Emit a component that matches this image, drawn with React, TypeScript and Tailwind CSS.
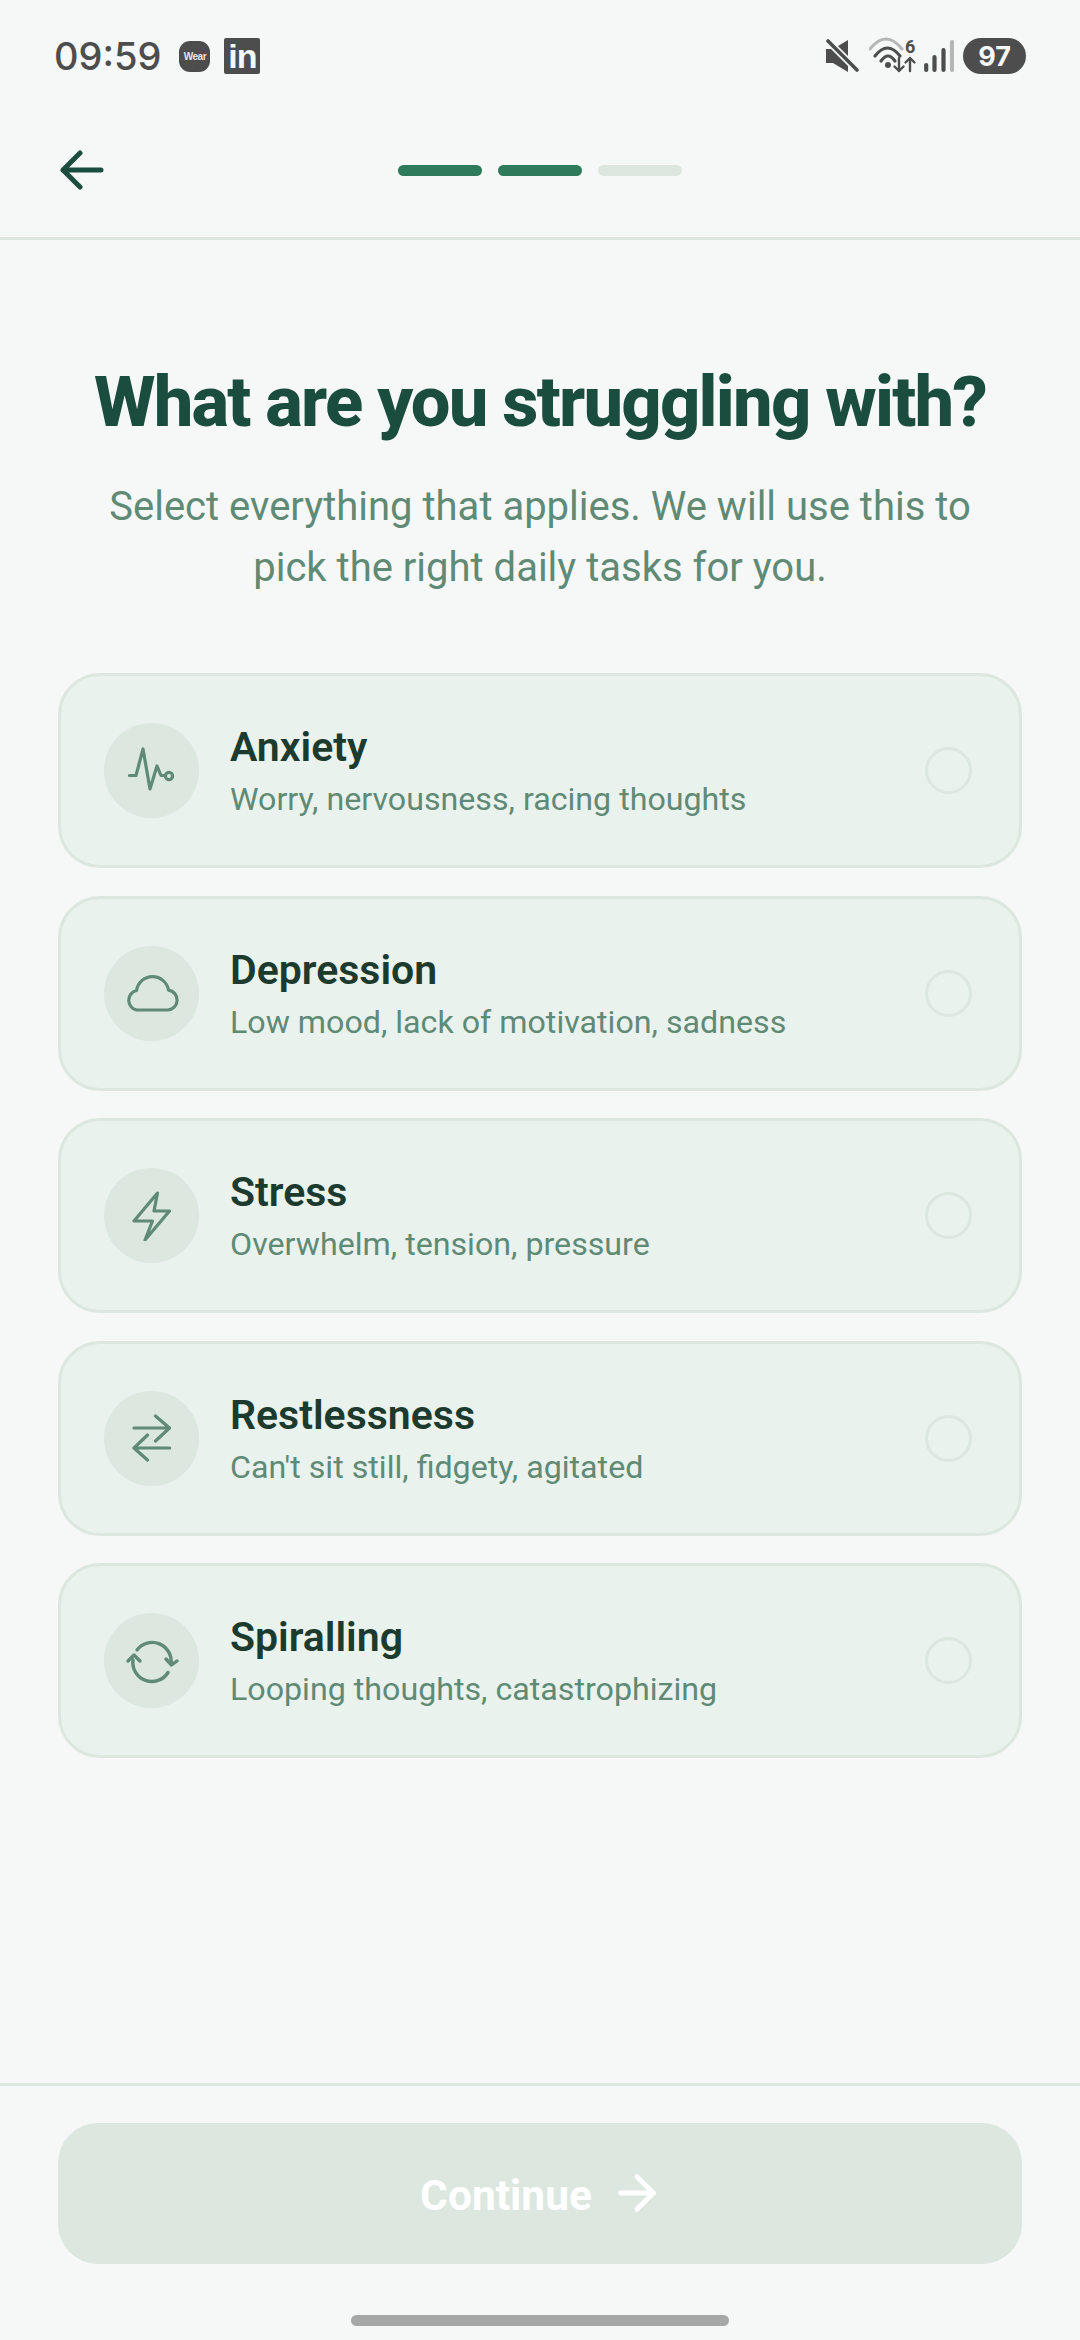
import { ArrowRight } from "lucide-react";
import type { ReactNode } from "react";

const options: { title: string; sub: string; icon: ReactNode }[] = [
  {
    title: "Anxiety",
    sub: "Worry, nervousness, racing thoughts",
    icon: (
      <svg viewBox="0 0 48 48" className="h-[48px] w-[48px]" fill="none" stroke="#5f8a76" strokeWidth="3.2" strokeLinecap="round" strokeLinejoin="round">
        <path d="M1.5 28.5h6.5L15 2l7 40 7-23 4 9.500h4.500" />
        <circle cx="41" cy="29" r="3.600" />
      </svg>
    ),
  },
  {
    title: "Depression",
    sub: "Low mood, lack of motivation, sadness",
    icon: (
      <svg viewBox="-1.5 -1.5 56 38" className="h-[38px] w-[56px]" fill="none" stroke="#5f8a76" strokeWidth="3.2" strokeLinecap="round" strokeLinejoin="round">
        <path d="M11 34.5h31a10 10 0 0 0 1-19.9A16.2 16.2 0 0 0 11 15a10 10 0 0 0 0 19.5z" />
      </svg>
    ),
  },
  {
    title: "Stress",
    sub: "Overwhelm, tension, pressure",
    icon: (
      <svg viewBox="-1.5 -1 39 50" className="h-[50px] w-[39px]" fill="none" stroke="#5f8a76" strokeWidth="3.2" strokeLinecap="round" strokeLinejoin="round">
        <path d="M24 1L0.5 29H19L11.5 48L36 19H20.5z" />
      </svg>
    ),
  },
  {
    title: "Restlessness",
    sub: "Can't sit still, fidgety, agitated",
    icon: (
      <svg viewBox="-1.5 -1 39 48" className="h-[48px] w-[39px]" fill="none" stroke="#5f8a76" strokeWidth="3.2" strokeLinecap="round" strokeLinejoin="round">
        <path d="M0.5 13H36M22 1l14 12-14 13M36 33H0.5M14 20L0.5 33 14 45" />
      </svg>
    ),
  },
  {
    title: "Spiralling",
    sub: "Looping thoughts, catastrophizing",
    icon: (
      <svg viewBox="-28 -28 56 56" className="h-[56px] w-[56px]" fill="none" stroke="#5f8a76" strokeWidth="3.4" strokeLinecap="round" strokeLinejoin="round">
        <path d="M-15 -11A19 19 0 0 1 19 3" />
        <path d="M14 -2L19.5 4 25 0" />
        <path d="M16 11.5A19 19 0 0 1 -19 -1" />
        <path d="M-24 0L-18 -6 -12 0" />
      </svg>
    ),
  },
];

function StatusBar() {
  return (
    <div className="flex h-[112px] items-center justify-between pl-[54px] pr-[54px] text-[#4d4d4d]">
      <div className="flex items-center">
        <span className="font-['Inter'] text-[38px] leading-none font-medium">09:59</span>
        <div className="ml-[18px] flex h-[31px] w-[31px] items-center justify-center rounded-[11px] bg-[#4d4d4d] font-['Liberation_Sans'] text-[10px] font-bold tracking-[-0.5px] text-[#e4e4e4]">
          Wear
        </div>
        <div className="ml-[14px] flex h-[36px] w-[36px] items-end justify-center rounded-[2px] bg-[#4d4d4d] pb-[2px] font-['Liberation_Sans'] text-[34px] leading-[32px] font-bold tracking-[-1px] text-[#f6f8f7]">
          in
        </div>
      </div>
      <div className="flex items-center">
        <svg viewBox="0 0 34 34" className="h-[34px] w-[34px]" fill="#4d4d4d">
          <path d="M1 10h7L23 1v32L8 24H1z" />
          <path d="M3 2l29 29" stroke="#f6f8f7" strokeWidth="7" />
          <path d="M3 2l29 29" stroke="#4d4d4d" strokeWidth="3.6" strokeLinecap="round" />
        </svg>
        <svg viewBox="0 0 48 38" className="ml-[10px] h-[38px] w-[48px]" fill="none" strokeLinecap="round" strokeLinejoin="round">
          <path d="M1 12Q17 -8 33 12" stroke="#b5b6b5" strokeWidth="3" />
          <path d="M6 19Q18.5 3 31 19" stroke="#4d4d4d" strokeWidth="3.2" />
          <path d="M12 24Q19 14 26 24" stroke="#4d4d4d" strokeWidth="3.2" />
          <circle cx="19" cy="28" r="3" fill="#4d4d4d" />
          <path d="M30 21v13m-4.500-4.500l4.500 4.500 4.500-4.500M41 34V21m-4.500 4.500l4.500-4.500 4.500 4.500" stroke="#4d4d4d" strokeWidth="2.4" />
          <text x="36" y="16" fill="#4d4d4d" fontFamily="Roboto" fontSize="18" fontWeight="700">6</text>
        </svg>
        <svg viewBox="0 0 30 34" className="ml-[7px] h-[34px] w-[30px]" fill="none" strokeLinecap="round" strokeWidth="4.2">
          <path d="M2.2 31v-5M10.5 31V18M19.500 31V11" stroke="#4d4d4d" />
          <path d="M28 31V3" stroke="#b5b6b5" />
        </svg>
        <div className="ml-[9px] flex h-[36px] w-[63px] items-center justify-center rounded-full bg-[#4d4d4d] font-['Inter'] text-[27px] leading-none font-bold text-[#f6f8f7]">
          97
        </div>
      </div>
    </div>
  );
}

function OptionCard({ title, sub, icon }: { title: string; sub: string; icon: ReactNode }) {
  return (
    <div className="flex h-[195px] items-center rounded-[42px] border-[3.5px] border-[#dce7e0] bg-[#e9f2ed] pl-[43px] pr-[47px]">
      <div className="flex h-[95px] w-[95px] shrink-0 items-center justify-center rounded-full bg-[#dce7e0]">{icon}</div>
      <div className="ml-[31px] flex-1 pt-[3px]">
        <div className="text-[41px] leading-[48px] font-semibold text-[#1c3a2e]">{title}</div>
        <div className="mt-[6px] text-[32.2px] leading-[44px] text-[#5f8a76]">{sub}</div>
      </div>
      <div className="h-[47px] w-[47px] shrink-0 rounded-full border-[3.5px] border-[#dce7e0]" />
    </div>
  );
}

export default function App() {
  return (
    <div className="flex h-[2340px] w-[1080px] flex-col overflow-hidden bg-[#f6f8f7] font-['Roboto',sans-serif]">
      <StatusBar />
      <div className="relative flex h-[128px] items-center justify-center border-b-[3.5px] border-[#dce7e0] pb-[8px]">
        <svg viewBox="0 0 44 40" className="absolute left-[60px] top-[38px] h-[40px] w-[44px]" fill="none" stroke="#1b4d3e" strokeWidth="5" strokeLinecap="round" strokeLinejoin="round">
          <path d="M3 20h38M20 3L3 20l17 17" />
        </svg>
        <div className="flex gap-[16px]">
          <div className="h-[11px] w-[84px] rounded-full bg-[#2f7a5a]" />
          <div className="h-[11px] w-[84px] rounded-full bg-[#2f7a5a]" />
          <div className="h-[11px] w-[84px] rounded-full bg-[#dce7e0]" />
        </div>
      </div>

      <div className="flex-1 px-[58px] pt-[121px]">
        <h1 className="text-center text-[70.5px] leading-[82px] font-extrabold tracking-[-1.8px] whitespace-nowrap text-[#1b4d3e]">What are you struggling with?</h1>
        <p className="mt-[33px] text-center text-[40px] leading-[61px] text-[#5f8a76]">
          Select everything that applies. We will use this to
          <br />
          pick the right daily tasks for you.
        </p>
        <div className="mt-[75px] flex flex-col gap-[27.5px]">
          {options.map((o) => (
            <OptionCard key={o.title} title={o.title} sub={o.sub} icon={o.icon} />
          ))}
        </div>
      </div>

      <div className="h-[257px] border-t-[3.5px] border-[#dce7e0] px-[58px] pt-[36.5px]">
        <div className="flex h-[141px] items-center justify-center rounded-[40px] bg-[#dce7e0] pl-[5px] text-[42.5px] font-bold text-white">
          <span className="pt-[5px]">Continue</span>
          <ArrowRight className="ml-[17px] h-[56px] w-[56px]" strokeWidth={2.1} />
        </div>
        <div className="mx-auto mt-[51px] h-[11px] w-[378px] rounded-full bg-[#a6a8a7]" />
      </div>
    </div>
  );
}
